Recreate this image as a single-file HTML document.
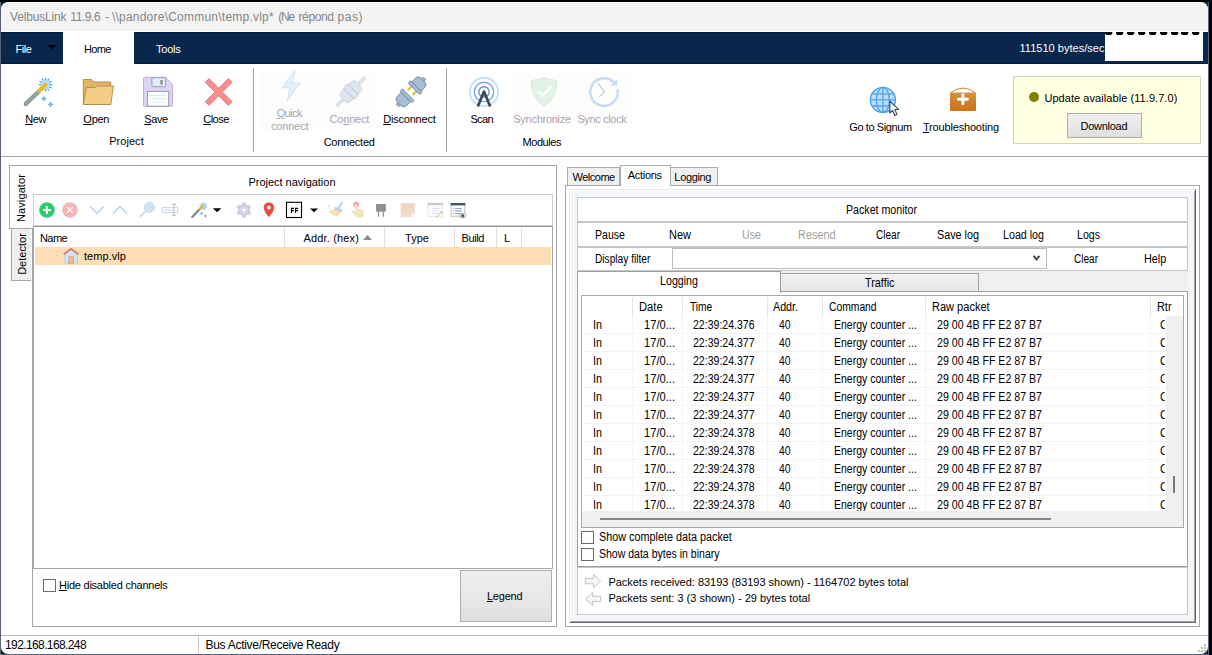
<!DOCTYPE html>
<html><head><meta charset="utf-8"><title>VelbusLink</title>
<style>
html,body{margin:0;padding:0;}
body{width:1212px;height:655px;overflow:hidden;background:#000;position:relative;font-family:"Liberation Sans",sans-serif;font-size:11px;color:#000;}
div{box-sizing:border-box;}
.t,.m,.ti,.s{position:absolute;white-space:nowrap;height:16px;line-height:16px;font-family:"Liberation Sans",sans-serif;}
.t{font-size:11px;}
.m{font-size:12px;transform-origin:0 50%;}
.s{font-size:12px;}
.ti{font-size:12px;color:#858585;}
u{text-decoration:underline;text-underline-offset:1px;}
svg{position:absolute;overflow:visible;}
</style></head><body>
<div style="position:absolute;left:0px;top:2px;width:1px;height:653px;background:#566378"></div>
<div style="position:absolute;left:0px;top:654px;width:1209px;height:1px;background:#566378"></div>
<div style="position:absolute;left:1px;top:2px;width:1207px;height:40px;background:#09274b"></div>
<div style="position:absolute;left:1px;top:600px;width:1207px;height:54px;background:#10151c"></div>
<div style="position:absolute;left:1px;top:2px;width:1207px;height:30px;background:#f3f3f3;border-radius:7px 7px 0 0;border-top:1px solid #fff;border-bottom:1px solid #fff"></div>
<div style="position:absolute;left:1px;top:32px;width:1207px;height:32px;background:#09274b;border-top:1px solid #031b3c;border-bottom:1px solid #031b3c"></div>
<div style="position:absolute;left:1px;top:64px;width:1207px;height:590px;background:#fff;border-radius:0 0 7px 7px"></div>
<div style="position:absolute;left:1208px;top:2px;width:1px;height:652px;background:#566378"></div>
<div class="ti" style="left:10px;top:9px;letter-spacing:-0.174px;">VelbusLink</div>
<div class="ti" style="left:70.3px;top:9px;letter-spacing:-0.412px;">11.9.6</div>
<div class="ti" style="left:104.9px;top:9px;">-</div>
<div class="ti" style="left:111.9px;top:9px;letter-spacing:0.228px;">\\pandore\Commun\temp.vlp*</div>
<div class="ti" style="left:278.2px;top:9px;letter-spacing:-1.179px;">(Ne</div>
<div class="ti" style="left:298.5px;top:9px;letter-spacing:-0.394px;">répond</div>
<div class="ti" style="left:337.5px;top:9px;letter-spacing:0.539px;">pas)</div>
<div style="position:absolute;left:63px;top:32px;width:71px;height:32px;background:#fff"></div>
<div class="t" style="left:15.5px;top:41px;color:#fff;letter-spacing:-0.431px;">File</div>
<svg style="left:48px;top:45px" width="8" height="4"><path d="M0 0H8L4 4.2Z" fill="#000"/></svg>
<div class="t" style="left:84px;top:41px;letter-spacing:-0.661px;">Home</div>
<div class="t" style="left:156px;top:41px;color:#fff;letter-spacing:-0.216px;">Tools</div>
<div class="t" style="left:1019.5px;top:40px;color:#fff;letter-spacing:0.025px;">111510 bytes/sec</div>
<div style="position:absolute;left:1105px;top:32px;width:98px;height:29px;background:#fff"></div>
<svg style="left:1105px;top:32px" width="8" height="3"><path d="M0 0H7.3V1.3Q7.3 1.8 6.9 2.1L6.2 2.8Q5.9 3 5.5 3H1.8Q1.4 3 1.1 2.8L0.4 2.1Q0 1.8 0 1.3Z" fill="#000"/></svg>
<svg style="left:1115.7px;top:32px" width="8" height="3"><path d="M0 0H7.3V1.3Q7.3 1.8 6.9 2.1L6.2 2.8Q5.9 3 5.5 3H1.8Q1.4 3 1.1 2.8L0.4 2.1Q0 1.8 0 1.3Z" fill="#000"/></svg>
<svg style="left:1126.8px;top:32px" width="8" height="3"><path d="M0 0H7.3V1.3Q7.3 1.8 6.9 2.1L6.2 2.8Q5.9 3 5.5 3H1.8Q1.4 3 1.1 2.8L0.4 2.1Q0 1.8 0 1.3Z" fill="#000"/></svg>
<svg style="left:1137.8px;top:32px" width="8" height="3"><path d="M0 0H7.3V1.3Q7.3 1.8 6.9 2.1L6.2 2.8Q5.9 3 5.5 3H1.8Q1.4 3 1.1 2.8L0.4 2.1Q0 1.8 0 1.3Z" fill="#000"/></svg>
<svg style="left:1148.9px;top:32px" width="8" height="3"><path d="M0 0H7.3V1.3Q7.3 1.8 6.9 2.1L6.2 2.8Q5.9 3 5.5 3H1.8Q1.4 3 1.1 2.8L0.4 2.1Q0 1.8 0 1.3Z" fill="#000"/></svg>
<svg style="left:1159.5px;top:32px" width="8" height="3"><path d="M0 0H7.3V1.3Q7.3 1.8 6.9 2.1L6.2 2.8Q5.9 3 5.5 3H1.8Q1.4 3 1.1 2.8L0.4 2.1Q0 1.8 0 1.3Z" fill="#000"/></svg>
<svg style="left:1170.6px;top:32px" width="8" height="3"><path d="M0 0H7.3V1.3Q7.3 1.8 6.9 2.1L6.2 2.8Q5.9 3 5.5 3H1.8Q1.4 3 1.1 2.8L0.4 2.1Q0 1.8 0 1.3Z" fill="#000"/></svg>
<svg style="left:1181.1px;top:32px" width="8" height="3"><path d="M0 0H7.3V1.3Q7.3 1.8 6.9 2.1L6.2 2.8Q5.9 3 5.5 3H1.8Q1.4 3 1.1 2.8L0.4 2.1Q0 1.8 0 1.3Z" fill="#000"/></svg>
<svg style="left:1191.7px;top:32px" width="8" height="3"><path d="M0 0H7.3V1.3Q7.3 1.8 6.9 2.1L6.2 2.8Q5.9 3 5.5 3H1.8Q1.4 3 1.1 2.8L0.4 2.1Q0 1.8 0 1.3Z" fill="#000"/></svg>
<div style="position:absolute;left:1px;top:156px;width:1207px;height:1px;background:#a6a6a6"></div>
<div style="position:absolute;left:253px;top:68px;width:1px;height:84px;background:#a2a2a2"></div>
<div style="position:absolute;left:446px;top:68px;width:1px;height:84px;background:#a2a2a2"></div>
<div style="position:absolute;left:260px;top:69px;width:57px;height:62px;background:#fdfdfd"></div>
<div style="position:absolute;left:320px;top:69px;width:58px;height:62px;background:#fdfdfd"></div>
<div style="position:absolute;left:513px;top:69px;width:119px;height:62px;background:#fdfdfd"></div>
<div class="t" style="left:-4.37px;top:111px;width:80px;text-align:center;letter-spacing:-0.335px;"><u>N</u>ew</div>
<div class="t" style="left:56.26px;top:111px;width:80px;text-align:center;letter-spacing:-0.277px;"><u>O</u>pen</div>
<div class="t" style="left:116.03px;top:111px;width:80px;text-align:center;letter-spacing:-0.343px;"><u>S</u>ave</div>
<div class="t" style="left:176.03px;top:111px;width:80px;text-align:center;letter-spacing:-0.545px;"><u>C</u>lose</div>
<div class="t" style="left:86.52px;top:133px;width:80px;text-align:center;letter-spacing:0.038px;">Project</div>
<div class="t" style="left:249.33px;top:105px;width:80px;text-align:center;color:#a9a4ae;letter-spacing:-0.544px;"><u>Q</u>uick</div>
<div class="t" style="left:249.73px;top:118px;width:80px;text-align:center;color:#a9a4ae;letter-spacing:-0.132px;">connect</div>
<div class="t" style="left:309.40px;top:111px;width:80px;text-align:center;color:#a9a4ae;letter-spacing:-0.196px;">Co<u>n</u>nect</div>
<div class="t" style="left:369.39px;top:111px;width:80px;text-align:center;letter-spacing:-0.211px;"><u>D</u>isconnect</div>
<div class="t" style="left:309.18px;top:134px;width:80px;text-align:center;letter-spacing:-0.245px;">Connected</div>
<div class="t" style="left:441.69px;top:111px;width:80px;text-align:center;letter-spacing:-0.618px;">Scan</div>
<div class="t" style="left:502.06px;top:111px;width:80px;text-align:center;color:#a9a4ae;letter-spacing:-0.276px;">Synchronize</div>
<div class="t" style="left:561.92px;top:111px;width:80px;text-align:center;color:#a9a4ae;letter-spacing:-0.357px;">Sync clock</div>
<div class="t" style="left:501.80px;top:134px;width:80px;text-align:center;letter-spacing:-0.397px;">Modules</div>
<div class="t" style="left:830.50px;top:119px;width:100px;text-align:center;letter-spacing:-0.396px;">Go to Signum</div>
<div class="t" style="left:910.92px;top:119px;width:100px;text-align:center;letter-spacing:-0.165px;"><u>T</u>roubleshooting</div>
<div style="position:absolute;left:1013px;top:76px;width:188px;height:68px;background:#ffffe1;border:1px solid #d4d4c4"></div>
<div style="position:absolute;left:1029px;top:92px;width:10px;height:10px;background:#7f7f00;border-radius:5px"></div>
<div class="t" style="left:1044.4px;top:90px;letter-spacing:0.064px;">Update available (11.9.7.0)</div>
<div style="position:absolute;left:1067px;top:113px;width:75px;height:25px;background:linear-gradient(#eeeeee,#e9e9e9 45%,#dfdfdf);border:1px solid #adadad"></div>
<div class="t" style="left:1066.87px;top:118px;width:74px;text-align:center;letter-spacing:-0.265px;">Download</div>
<div style="position:absolute;left:9px;top:165px;width:548px;height:1px;background:#a6a6a6"></div>
<div style="position:absolute;left:9px;top:165px;width:1px;height:63px;background:#a6a6a6"></div>
<div style="position:absolute;left:9px;top:228px;width:24px;height:1px;background:#a6a6a6"></div>
<div style="position:absolute;left:32px;top:228px;width:1px;height:399px;background:#a6a6a6"></div>
<div style="position:absolute;left:32px;top:626px;width:525px;height:1px;background:#a6a6a6"></div>
<div style="position:absolute;left:556px;top:165px;width:1px;height:462px;background:#a6a6a6"></div>
<div style="position:absolute;left:11px;top:229px;width:20px;height:52px;background:#f0f0f0;border:1px solid #a6a6a6;border-top:none;border-right:none"></div>
<div class="t" style="left:-19.35px;top:190px;width:80px;text-align:center;transform:rotate(-90deg);letter-spacing:0.102px">Navigator</div>
<div class="t" style="left:-17.99px;top:246.4px;width:80px;text-align:center;transform:rotate(-90deg);letter-spacing:0.016px">Detector</div>
<div class="t" style="left:191.99px;top:174px;width:200px;text-align:center;letter-spacing:-0.025px;">Project navigation</div>
<div style="position:absolute;left:33px;top:194px;width:520px;height:32px;border:1px solid #d0d0d0;background:#fff"></div>
<div style="position:absolute;left:33px;top:226px;width:520px;height:343px;border:1px solid #a0a6b0;border-top:1px solid #8f959e;background:#fff"></div>
<div class="t" style="left:40px;top:230px;letter-spacing:-0.586px;">Name</div>
<div style="position:absolute;left:284px;top:228px;width:1px;height:19px;background:#e0e0e0"></div>
<div style="position:absolute;left:384px;top:228px;width:1px;height:19px;background:#e0e0e0"></div>
<div style="position:absolute;left:454px;top:228px;width:1px;height:19px;background:#e0e0e0"></div>
<div style="position:absolute;left:496px;top:228px;width:1px;height:19px;background:#e0e0e0"></div>
<div style="position:absolute;left:521px;top:228px;width:1px;height:19px;background:#e0e0e0"></div>
<div class="t" style="left:303.5px;top:230px;letter-spacing:0.154px;">Addr. (hex)</div>
<svg style="left:363px;top:235px" width="9" height="5"><path d="M0 5L4.5 0L9 5Z" fill="#8a8a8a"/></svg>
<div class="t" style="left:405px;top:230px;letter-spacing:0.038px;">Type</div>
<div class="t" style="left:461.5px;top:230px;letter-spacing:-0.392px;">Build</div>
<div class="t" style="left:504px;top:230px;">L</div>
<div style="position:absolute;left:35px;top:247px;width:516px;height:18px;background:#ffdeb5"></div>
<div class="t" style="left:84px;top:248px;letter-spacing:0.053px;">temp.vlp</div>
<div style="position:absolute;left:43px;top:579px;width:13px;height:13px;border:1px solid #6a6a6a;background:#fff"></div>
<div class="t" style="left:59px;top:577px;letter-spacing:-0.238px;"><u>H</u>ide disabled channels</div>
<div style="position:absolute;left:460px;top:570px;width:92px;height:52px;background:linear-gradient(#eeeeee,#e9e9e9 45%,#dfdfdf);border:1px solid #adadad"></div>
<div class="t" style="left:459.70px;top:588px;width:90px;text-align:center;letter-spacing:-0.201px;"><u>L</u>egend</div>
<div style="position:absolute;left:1204px;top:644px;width:2px;height:2px;background:#bdbdbd"></div>
<div style="position:absolute;left:1201px;top:647px;width:2px;height:2px;background:#bdbdbd"></div>
<div style="position:absolute;left:1204px;top:647px;width:2px;height:2px;background:#bdbdbd"></div>
<div style="position:absolute;left:1198px;top:650px;width:2px;height:2px;background:#bdbdbd"></div>
<div style="position:absolute;left:1201px;top:650px;width:2px;height:2px;background:#bdbdbd"></div>
<div style="position:absolute;left:1204px;top:650px;width:2px;height:2px;background:#bdbdbd"></div>
<div style="position:absolute;left:1px;top:635px;width:1207px;height:1px;background:#bababa"></div>
<div style="position:absolute;left:198px;top:636px;width:1px;height:18px;background:#c8c8c8"></div>
<div class="s" style="left:5px;top:637px;letter-spacing:-0.606px;">192.168.168.248</div>
<div class="s" style="left:205.5px;top:637px;letter-spacing:-0.287px;">Bus Active/Receive Ready</div>
<div style="position:absolute;left:565px;top:185px;width:635px;height:442px;border:1px solid #a6a6a6;background:#fff"></div>
<div style="position:absolute;left:569px;top:189px;width:627px;height:434px;background:#fff;border-left:1px solid #e9e9e9;border-top:1px solid #e9e9e9;border-right:1px solid #696969;border-bottom:1px solid #696969"></div>
<div style="position:absolute;left:571px;top:191px;width:624px;height:431px;background:#f3f6fb;border-right:1px solid #a0a0a0;border-bottom:1px solid #a0a0a0"></div>
<div style="position:absolute;left:567px;top:167px;width:53px;height:18px;background:#f0f0f0;border:1px solid #acacac;border-bottom:none"></div>
<div style="position:absolute;left:671px;top:167px;width:47px;height:18px;background:#f0f0f0;border:1px solid #acacac;border-bottom:none;border-left:none"></div>
<div style="position:absolute;left:620px;top:165px;width:51px;height:21px;background:#fff;border:1px solid #acacac;border-bottom:none"></div>
<div class="t" style="left:563.65px;top:169px;width:60px;text-align:center;letter-spacing:-0.492px;">Welcome</div>
<div class="t" style="left:614.85px;top:167px;width:60px;text-align:center;letter-spacing:-0.296px;">Actions</div>
<div class="t" style="left:662.73px;top:169px;width:60px;text-align:center;letter-spacing:-0.350px;">Logging</div>
<div style="position:absolute;left:577px;top:197px;width:611px;height:25px;border:1px solid #c6c6c6;background:#fff"></div>
<div class="m" style="left:846.20px;top:202px;transform:scaleX(0.8871);">Packet monitor</div>
<div style="position:absolute;left:577px;top:222px;width:611px;height:25px;border:1px solid #c6c6c6;background:#fff"></div>
<div class="m" style="left:595.30px;top:227px;transform:scaleX(0.8817);">Pause</div>
<div class="m" style="left:669.40px;top:227px;transform:scaleX(0.9164);">New</div>
<div class="m" style="left:742.30px;top:227px;transform:scaleX(0.8904);color:#a0a0a0;">Use</div>
<div class="m" style="left:798.30px;top:227px;transform:scaleX(0.9115);color:#a0a0a0;">Resend</div>
<div class="m" style="left:875.60px;top:227px;transform:scaleX(0.8369);">Clear</div>
<div class="m" style="left:937.20px;top:227px;transform:scaleX(0.8994);">Save log</div>
<div class="m" style="left:1003.30px;top:227px;transform:scaleX(0.8905);">Load log</div>
<div class="m" style="left:1077.00px;top:227px;transform:scaleX(0.8839);">Logs</div>
<div style="position:absolute;left:577px;top:247px;width:611px;height:24px;border:1px solid #c6c6c6;background:#fff"></div>
<div class="m" style="left:594.70px;top:251px;transform:scaleX(0.8477);">Display filter</div>
<div style="position:absolute;left:672px;top:248px;width:375px;height:21px;border:1px solid #bdbdbd;background:#fff"></div>
<svg style="left:1033px;top:255px" width="7" height="6"><path d="M0.5 0.8L3.5 4.4L6.5 0.8" fill="none" stroke="#484848" stroke-width="2"/></svg>
<div class="m" style="left:1073.80px;top:251px;transform:scaleX(0.8369);">Clear</div>
<div class="m" style="left:1144.20px;top:251px;transform:scaleX(0.9036);">Help</div>
<div style="position:absolute;left:577px;top:271px;width:611px;height:21px;background:#f0f0f0"></div>
<div style="position:absolute;left:577px;top:291px;width:611px;height:276px;border:1px solid #a0a0a0;background:#fff"></div>
<div style="position:absolute;left:780px;top:273px;width:199px;height:19px;background:linear-gradient(#f2f2f2,#e6e6e6);border:1px solid #a0a0a0"></div>
<div style="position:absolute;left:577px;top:271px;width:204px;height:22px;background:#fff;border:1px solid #a0a0a0;border-bottom:none"></div>
<div class="m" style="left:660.30px;top:273px;transform:scaleX(0.8897);">Logging</div>
<div class="m" style="left:864.85px;top:275px;transform:scaleX(0.9029);">Traffic</div>
<div style="position:absolute;left:581px;top:295px;width:603px;height:233px;border:1px solid #a6a9b0;background:#fff"></div>
<div style="position:absolute;left:632px;top:297px;width:1px;height:19px;background:#e5e5e5"></div>
<div style="position:absolute;left:682px;top:297px;width:1px;height:19px;background:#e5e5e5"></div>
<div style="position:absolute;left:767px;top:297px;width:1px;height:19px;background:#e5e5e5"></div>
<div style="position:absolute;left:822px;top:297px;width:1px;height:19px;background:#e5e5e5"></div>
<div style="position:absolute;left:925px;top:297px;width:1px;height:19px;background:#e5e5e5"></div>
<div style="position:absolute;left:1150px;top:297px;width:1px;height:19px;background:#e5e5e5"></div>
<div class="m" style="left:639.10px;top:299px;transform:scaleX(0.9311);">Date</div>
<div class="m" style="left:689.70px;top:299px;transform:scaleX(0.8505);">Time</div>
<div class="m" style="left:773.40px;top:299px;transform:scaleX(0.8922);">Addr.</div>
<div class="m" style="left:829.00px;top:299px;transform:scaleX(0.8599);">Command</div>
<div class="m" style="left:932.30px;top:299px;transform:scaleX(0.9187);">Raw packet</div>
<div class="m" style="left:1156.60px;top:299px;transform:scaleX(0.9065);">Rtr</div>
<div class="m" style="left:593.20px;top:317px;transform:scaleX(0.8993);">In</div>
<div class="m" style="left:643.60px;top:317px;transform:scaleX(0.9293);">17/0...</div>
<div class="m" style="left:693.40px;top:317px;transform:scaleX(0.8792);">22:39:24.376</div>
<div class="m" style="left:778.80px;top:317px;transform:scaleX(0.8691);">40</div>
<div class="m" style="left:833.60px;top:317px;transform:scaleX(0.8742);">Energy counter ...</div>
<div class="m" style="left:936.50px;top:317px;transform:scaleX(0.8843);">29 00 4B FF E2 87 B7</div>
<div class="m" style="left:1160.00px;top:317px;transform:scaleX(0.9150);width:5px;overflow:hidden;">C</div>
<div class="m" style="left:593.20px;top:335px;transform:scaleX(0.8993);">In</div>
<div class="m" style="left:643.60px;top:335px;transform:scaleX(0.9293);">17/0...</div>
<div class="m" style="left:693.40px;top:335px;transform:scaleX(0.8792);">22:39:24.377</div>
<div class="m" style="left:778.80px;top:335px;transform:scaleX(0.8691);">40</div>
<div class="m" style="left:833.60px;top:335px;transform:scaleX(0.8742);">Energy counter ...</div>
<div class="m" style="left:936.50px;top:335px;transform:scaleX(0.8843);">29 00 4B FF E2 87 B7</div>
<div class="m" style="left:1160.00px;top:335px;transform:scaleX(0.9150);width:5px;overflow:hidden;">C</div>
<div class="m" style="left:593.20px;top:353px;transform:scaleX(0.8993);">In</div>
<div class="m" style="left:643.60px;top:353px;transform:scaleX(0.9293);">17/0...</div>
<div class="m" style="left:693.40px;top:353px;transform:scaleX(0.8792);">22:39:24.377</div>
<div class="m" style="left:778.80px;top:353px;transform:scaleX(0.8691);">40</div>
<div class="m" style="left:833.60px;top:353px;transform:scaleX(0.8742);">Energy counter ...</div>
<div class="m" style="left:936.50px;top:353px;transform:scaleX(0.8843);">29 00 4B FF E2 87 B7</div>
<div class="m" style="left:1160.00px;top:353px;transform:scaleX(0.9150);width:5px;overflow:hidden;">C</div>
<div class="m" style="left:593.20px;top:371px;transform:scaleX(0.8993);">In</div>
<div class="m" style="left:643.60px;top:371px;transform:scaleX(0.9293);">17/0...</div>
<div class="m" style="left:693.40px;top:371px;transform:scaleX(0.8792);">22:39:24.377</div>
<div class="m" style="left:778.80px;top:371px;transform:scaleX(0.8691);">40</div>
<div class="m" style="left:833.60px;top:371px;transform:scaleX(0.8742);">Energy counter ...</div>
<div class="m" style="left:936.50px;top:371px;transform:scaleX(0.8843);">29 00 4B FF E2 87 B7</div>
<div class="m" style="left:1160.00px;top:371px;transform:scaleX(0.9150);width:5px;overflow:hidden;">C</div>
<div class="m" style="left:593.20px;top:389px;transform:scaleX(0.8993);">In</div>
<div class="m" style="left:643.60px;top:389px;transform:scaleX(0.9293);">17/0...</div>
<div class="m" style="left:693.40px;top:389px;transform:scaleX(0.8792);">22:39:24.377</div>
<div class="m" style="left:778.80px;top:389px;transform:scaleX(0.8691);">40</div>
<div class="m" style="left:833.60px;top:389px;transform:scaleX(0.8742);">Energy counter ...</div>
<div class="m" style="left:936.50px;top:389px;transform:scaleX(0.8843);">29 00 4B FF E2 87 B7</div>
<div class="m" style="left:1160.00px;top:389px;transform:scaleX(0.9150);width:5px;overflow:hidden;">C</div>
<div class="m" style="left:593.20px;top:407px;transform:scaleX(0.8993);">In</div>
<div class="m" style="left:643.60px;top:407px;transform:scaleX(0.9293);">17/0...</div>
<div class="m" style="left:693.40px;top:407px;transform:scaleX(0.8792);">22:39:24.377</div>
<div class="m" style="left:778.80px;top:407px;transform:scaleX(0.8691);">40</div>
<div class="m" style="left:833.60px;top:407px;transform:scaleX(0.8742);">Energy counter ...</div>
<div class="m" style="left:936.50px;top:407px;transform:scaleX(0.8843);">29 00 4B FF E2 87 B7</div>
<div class="m" style="left:1160.00px;top:407px;transform:scaleX(0.9150);width:5px;overflow:hidden;">C</div>
<div class="m" style="left:593.20px;top:425px;transform:scaleX(0.8993);">In</div>
<div class="m" style="left:643.60px;top:425px;transform:scaleX(0.9293);">17/0...</div>
<div class="m" style="left:693.40px;top:425px;transform:scaleX(0.8792);">22:39:24.378</div>
<div class="m" style="left:778.80px;top:425px;transform:scaleX(0.8691);">40</div>
<div class="m" style="left:833.60px;top:425px;transform:scaleX(0.8742);">Energy counter ...</div>
<div class="m" style="left:936.50px;top:425px;transform:scaleX(0.8843);">29 00 4B FF E2 87 B7</div>
<div class="m" style="left:1160.00px;top:425px;transform:scaleX(0.9150);width:5px;overflow:hidden;">C</div>
<div class="m" style="left:593.20px;top:443px;transform:scaleX(0.8993);">In</div>
<div class="m" style="left:643.60px;top:443px;transform:scaleX(0.9293);">17/0...</div>
<div class="m" style="left:693.40px;top:443px;transform:scaleX(0.8792);">22:39:24.378</div>
<div class="m" style="left:778.80px;top:443px;transform:scaleX(0.8691);">40</div>
<div class="m" style="left:833.60px;top:443px;transform:scaleX(0.8742);">Energy counter ...</div>
<div class="m" style="left:936.50px;top:443px;transform:scaleX(0.8843);">29 00 4B FF E2 87 B7</div>
<div class="m" style="left:1160.00px;top:443px;transform:scaleX(0.9150);width:5px;overflow:hidden;">C</div>
<div class="m" style="left:593.20px;top:461px;transform:scaleX(0.8993);">In</div>
<div class="m" style="left:643.60px;top:461px;transform:scaleX(0.9293);">17/0...</div>
<div class="m" style="left:693.40px;top:461px;transform:scaleX(0.8792);">22:39:24.378</div>
<div class="m" style="left:778.80px;top:461px;transform:scaleX(0.8691);">40</div>
<div class="m" style="left:833.60px;top:461px;transform:scaleX(0.8742);">Energy counter ...</div>
<div class="m" style="left:936.50px;top:461px;transform:scaleX(0.8843);">29 00 4B FF E2 87 B7</div>
<div class="m" style="left:1160.00px;top:461px;transform:scaleX(0.9150);width:5px;overflow:hidden;">C</div>
<div class="m" style="left:593.20px;top:479px;transform:scaleX(0.8993);">In</div>
<div class="m" style="left:643.60px;top:479px;transform:scaleX(0.9293);">17/0...</div>
<div class="m" style="left:693.40px;top:479px;transform:scaleX(0.8792);">22:39:24.378</div>
<div class="m" style="left:778.80px;top:479px;transform:scaleX(0.8691);">40</div>
<div class="m" style="left:833.60px;top:479px;transform:scaleX(0.8742);">Energy counter ...</div>
<div class="m" style="left:936.50px;top:479px;transform:scaleX(0.8843);">29 00 4B FF E2 87 B7</div>
<div class="m" style="left:1160.00px;top:479px;transform:scaleX(0.9150);width:5px;overflow:hidden;">C</div>
<div class="m" style="left:593.20px;top:497px;transform:scaleX(0.8993);">In</div>
<div class="m" style="left:643.60px;top:497px;transform:scaleX(0.9293);">17/0...</div>
<div class="m" style="left:693.40px;top:497px;transform:scaleX(0.8792);">22:39:24.378</div>
<div class="m" style="left:778.80px;top:497px;transform:scaleX(0.8691);">40</div>
<div class="m" style="left:833.60px;top:497px;transform:scaleX(0.8742);">Energy counter ...</div>
<div class="m" style="left:936.50px;top:497px;transform:scaleX(0.8843);">29 00 4B FF E2 87 B7</div>
<div class="m" style="left:1160.00px;top:497px;transform:scaleX(0.9150);width:5px;overflow:hidden;">C</div>
<div style="position:absolute;left:584px;top:333px;width:582px;height:1px;border-top:1px dotted #e9e9e9"></div>
<div style="position:absolute;left:584px;top:351px;width:582px;height:1px;border-top:1px dotted #e9e9e9"></div>
<div style="position:absolute;left:584px;top:369px;width:582px;height:1px;border-top:1px dotted #e9e9e9"></div>
<div style="position:absolute;left:584px;top:387px;width:582px;height:1px;border-top:1px dotted #e9e9e9"></div>
<div style="position:absolute;left:584px;top:405px;width:582px;height:1px;border-top:1px dotted #e9e9e9"></div>
<div style="position:absolute;left:584px;top:423px;width:582px;height:1px;border-top:1px dotted #e9e9e9"></div>
<div style="position:absolute;left:584px;top:441px;width:582px;height:1px;border-top:1px dotted #e9e9e9"></div>
<div style="position:absolute;left:584px;top:459px;width:582px;height:1px;border-top:1px dotted #e9e9e9"></div>
<div style="position:absolute;left:584px;top:477px;width:582px;height:1px;border-top:1px dotted #e9e9e9"></div>
<div style="position:absolute;left:584px;top:495px;width:582px;height:1px;border-top:1px dotted #e9e9e9"></div>
<div style="position:absolute;left:632px;top:317px;width:1px;height:194px;border-left:1px dotted #ebebeb"></div>
<div style="position:absolute;left:682px;top:317px;width:1px;height:194px;border-left:1px dotted #ebebeb"></div>
<div style="position:absolute;left:767px;top:317px;width:1px;height:194px;border-left:1px dotted #ebebeb"></div>
<div style="position:absolute;left:822px;top:317px;width:1px;height:194px;border-left:1px dotted #ebebeb"></div>
<div style="position:absolute;left:925px;top:317px;width:1px;height:194px;border-left:1px dotted #ebebeb"></div>
<div style="position:absolute;left:1150px;top:317px;width:1px;height:194px;border-left:1px dotted #ebebeb"></div>
<div style="position:absolute;left:1166px;top:316px;width:17px;height:195px;background:#f0f0f0"></div>
<div style="position:absolute;left:1173px;top:476px;width:2px;height:17px;background:#7a7a7a"></div>
<div style="position:absolute;left:582px;top:511px;width:601px;height:16px;background:#f0f0f0"></div>
<div style="position:absolute;left:600px;top:518px;width:451px;height:2px;background:#858585"></div>
<div style="position:absolute;left:581px;top:531px;width:13px;height:13px;border:1px solid #6a6a6a;background:#fff"></div>
<div style="position:absolute;left:581px;top:548px;width:13px;height:13px;border:1px solid #6a6a6a;background:#fff"></div>
<div class="m" style="left:598.60px;top:529px;transform:scaleX(0.9008);">Show complete data packet</div>
<div class="m" style="left:598.60px;top:546px;transform:scaleX(0.8769);">Show data bytes in binary</div>
<div style="position:absolute;left:577px;top:567px;width:611px;height:48px;border:1px solid #c6c6c6;background:#fff"></div>
<div class="t" style="left:608.4px;top:574px;letter-spacing:-0.021px;">Packets received: 83193 (83193 shown) - 1164702 bytes total</div>
<div class="t" style="left:608.4px;top:590px;letter-spacing:-0.002px;">Packets sent: 3 (3 shown) - 29 bytes total</div>
<svg style="left:0;top:0" width="1212" height="655" viewBox="0 0 1212 655">
<!-- NEW: wand -->
<g>
 <g fill="#3c9ae8">
  <path d="M45.6 76.8L46.7 80.5L44.5 80.5Z"/>
  <path d="M45.6 76.8L46.7 80.5L44.5 80.5Z" transform="rotate(30 45.6 84.6)"/><path d="M45.6 76.8L46.7 80.5L44.5 80.5Z" transform="rotate(60 45.6 84.6)"/>
  <path d="M45.6 76.8L46.7 80.5L44.5 80.5Z" transform="rotate(90 45.6 84.6)"/><path d="M45.6 76.8L46.7 80.5L44.5 80.5Z" transform="rotate(120 45.6 84.6)"/>
  <path d="M45.6 76.8L46.7 80.5L44.5 80.5Z" transform="rotate(150 45.6 84.6)"/><path d="M45.6 76.8L46.7 80.5L44.5 80.5Z" transform="rotate(180 45.6 84.6)"/>
  <path d="M45.6 76.8L46.7 80.5L44.5 80.5Z" transform="rotate(210 45.6 84.6)"/><path d="M45.6 76.8L46.7 80.5L44.5 80.5Z" transform="rotate(240 45.6 84.6)"/>
  <path d="M45.6 76.8L46.7 80.5L44.5 80.5Z" transform="rotate(270 45.6 84.6)"/><path d="M45.6 76.8L46.7 80.5L44.5 80.5Z" transform="rotate(300 45.6 84.6)"/>
  <path d="M45.6 76.8L46.7 80.5L44.5 80.5Z" transform="rotate(330 45.6 84.6)"/>
 </g>
 <circle cx="45.6" cy="84.6" r="5" fill="#b5dafc"/>
 <path d="M25.7 104L39 91.2" stroke="#77858a" stroke-width="4.2" stroke-linecap="round" fill="none"/>
 <path d="M25.7 104L39 91.2" stroke="#95a5a5" stroke-width="3" stroke-linecap="round" fill="none"/>
 <path d="M38.3 91.9L45.6 84.6" stroke="#f5b81a" stroke-width="4" stroke-linecap="butt" fill="none"/>
 <circle cx="45.5" cy="84.7" r="2" fill="#f5b81a"/>
 <path d="M43.9 95.7L44.8 97.8L46.9 98.7L44.8 99.6L43.9 101.7L43 99.6L40.9 98.7L43 97.8Z" fill="#3c9ae8"/>
 <circle cx="43.9" cy="98.7" r="0.9" fill="#9ccdf6"/>
 <path d="M50.5 101.2L51.4 103.4L53.6 104.3L51.4 105.2L50.5 107.4L49.6 105.2L47.4 104.3L49.6 103.4Z" fill="#3c9ae8"/>
 <circle cx="50.5" cy="104.3" r="0.9" fill="#9ccdf6"/>
</g>
<!-- OPEN: folder -->
<g stroke="#a6813f" stroke-width="0.8" stroke-linejoin="round">
 <path d="M83.3 104.5V79.5H91.8L93.7 81.9H110.7V104.5Z" fill="#e0b566"/>
 <path d="M83.3 104.5L86.3 87.5H95.4L97.6 86H113.6L110.7 104.5Z" fill="#f5ce85"/>
</g>
<!-- SAVE: floppy -->
<g>
 <path d="M144.4 77.3H165.6L172.5 84.3V105.3Q172.5 106.2 171.6 106.2H144.4Q143.5 106.2 143.5 105.3V78.2Q143.5 77.3 144.4 77.3Z" fill="#ddd4f3" stroke="#bfa4d4" stroke-width="0.9"/>
 <rect x="151.9" y="77.6" width="13.7" height="9.1" rx="1.2" fill="#e3ecf3" stroke="#8c9bb0" stroke-width="0.9"/>
 <rect x="160.3" y="80" width="2.5" height="4.6" fill="#8795a5"/>
 <rect x="147.4" y="91.4" width="21.3" height="14.8" fill="#fff" stroke="#8795a5" stroke-width="0.9"/>
 <path d="M150 95.4H166M150 98.6H166M150 102H166" stroke="#d6ecfb" stroke-width="1.2"/>
</g>
<!-- CLOSE: X -->
<g fill="#f78f8f" stroke="#cf5c62" stroke-width="0.7">
 <path d="M209 78.6L218.7 88.3L228.4 78.6L232.1 82.3L222.4 92L232.1 101.7L228.4 105.4L218.7 95.7L209 105.4L205.3 101.7L215 92L205.3 82.3Z"/>
</g>
<!-- QUICK CONNECT -->
<path d="M294.8 70.9L281.9 87.8H289.9L287.3 100.8L300.2 83.1H292.5Z" fill="#e3f0fc" stroke="#c9dcf0" stroke-width="0.8" stroke-linejoin="round"/>
<!-- CONNECT (disabled) -->
<g transform="translate(350.9 91.7) rotate(-45)" fill="#dde5ee" stroke="#c8d2de" stroke-width="0.8">
 <rect x="-19.8" y="-1.4" width="39.6" height="2.8"/>
 <rect x="-11" y="-6.6" width="11" height="13.2" rx="3.5"/>
 <rect x="-3" y="-8.2" width="6" height="16.4" rx="2.5"/>
 <rect x="0" y="-6.6" width="11" height="13.2" rx="3.5"/>
 <rect x="-2.9" y="-7.8" width="5.8" height="15.6" rx="2.2" stroke="none"/>
 <path d="M-3 -8V8M3 -8V8" fill="none" stroke="#c0ccda" stroke-width="1"/>
</g>
<!-- DISCONNECT -->
<g transform="translate(411 91.9) rotate(-45)" fill="#a9bcd4" stroke="#6682a4" stroke-width="0.9" stroke-linejoin="round">
 <rect x="-19.2" y="-1.7" width="4" height="3.4"/>
 <path d="M-7 -6.6V6.6H-12Q-16.8 6.6 -16.8 2V-2Q-16.8 -6.6 -12 -6.6Z"/>
 <rect x="-7.2" y="-8.2" width="3.3" height="16.4" rx="0.8"/>
 <rect x="-0.8" y="-4.4" width="5.4" height="1.9" fill="#e8c53e" stroke="#d9b02a" stroke-width="0.4"/>
 <rect x="-0.8" y="2.4" width="5.4" height="1.9" fill="#e8c53e" stroke="#d9b02a" stroke-width="0.4"/>
 <rect x="15.2" y="-1.7" width="4" height="3.4"/>
 <path d="M7.4 -6.6V6.6H12Q16.8 6.6 16.8 2V-2Q16.8 -6.6 12 -6.6Z"/>
 <rect x="4.3" y="-8.2" width="3.3" height="16.4" rx="0.8"/>
</g>
<!-- SCAN -->
<g fill="none">
 <circle cx="484" cy="91.9" r="14.1" stroke="#bfe3ff" stroke-width="1.9"/>
 <circle cx="484" cy="91.9" r="9.7" stroke="#7fa9ee" stroke-width="1.4"/>
 <circle cx="484" cy="91.9" r="5.2" stroke="#6a8fd6" stroke-width="1.4"/>
 <path d="M477.8 106.4L484 91.6L490.2 106.4" stroke="#3b4958" stroke-width="2.7" stroke-linejoin="round"/>
</g>
<!-- SYNCHRONIZE -->
<path d="M544 77.3Q538 80 531.3 80.5Q530.5 97 544 106.7Q557.5 97 556.7 80.5Q550 80 544 77.3Z" fill="#e2f2e6" stroke="#d2e8d8" stroke-width="0.8"/>
<path d="M538.2 91.2L542.6 95.4L551.2 86.8" fill="none" stroke="#fff" stroke-width="2.3"/>
<!-- SYNC CLOCK -->
<g fill="none">
 <path d="M617.5 89A13.8 13.8 0 1 1 614.6 83.2" stroke="#c9dcf5" stroke-width="2.6"/>
 <path d="M617 79V85.8H610.2Z" fill="#c9dcf5"/>
 <path d="M598.1 83.4L604.4 92L599.2 96.8" stroke="#c6ccd6" stroke-width="1.3"/>
 <path d="M604 81.3V82.3M604 101.7V102.7M593.3 92H594.3M613.7 92H614.7" stroke="#dfe8f3" stroke-width="1"/>
</g>
<!-- GO TO SIGNUM -->
<g>
 <circle cx="882.9" cy="99.9" r="12.5" fill="#bcdefb" stroke="#4da2ee" stroke-width="1.4"/>
 <g fill="none" stroke="#4da2ee" stroke-width="1.3">
  <path d="M870.4 99.9H895.4M872.2 93.9H893.6M872.2 106H893.6M882.9 87.4V112.4"/>
  <ellipse cx="882.9" cy="99.9" rx="6.5" ry="12.5"/>
 </g>
 <path d="M889.8 101.2V113L892.6 110.5L894.8 115.4L897 114.4L894.9 109.6L898.6 109.3Z" fill="#f4f6f7" stroke="#37474f" stroke-width="1.1" stroke-linejoin="round"/>
</g>
<!-- TROUBLESHOOTING -->
<defs><linearGradient id="kit" x1="0" y1="0" x2="0" y2="1"><stop offset="0" stop-color="#d6933e"/><stop offset="0.7" stop-color="#c97a22"/><stop offset="0.72" stop-color="#cf7f27"/><stop offset="1" stop-color="#c8741c"/></linearGradient></defs>
<path d="M950.4 92.8Q963 83.4 975.6 92.8" fill="#fff" stroke="#d2812b" stroke-width="1"/>
<rect x="950" y="92.6" width="26" height="18.3" rx="0.8" fill="url(#kit)"/>
<path d="M958.3 99.3H967.5M962.9 94.7V103.9" stroke="#fff" stroke-width="2.9" stroke-linecap="round"/>
<!-- add -->
<circle cx="46.95" cy="210" r="7.8" fill="#2ecc71"/>
<path d="M43 210H50.9M46.95 206.1V213.9" stroke="#fff" stroke-width="2.1"/>
<!-- remove -->
<circle cx="69.9" cy="210" r="7.8" fill="#f4b6b2"/>
<path d="M67 207.1L72.8 212.9M72.8 207.1L67 212.9" stroke="#fff" stroke-width="1.3"/>
<!-- chevrons -->
<path d="M89.9 206.3L96.9 213.3L104.1 206.3" fill="none" stroke="#b5d3ef" stroke-width="1.5"/>
<path d="M112.8 213.5L119.9 206.5L127.2 213.5" fill="none" stroke="#b5d3ef" stroke-width="1.5"/>
<!-- magnifier -->
<path d="M145.8 211.2L139.9 217" stroke="#d5dadf" stroke-width="2"/>
<circle cx="149.3" cy="207.4" r="5.2" fill="#cfe3f3" stroke="#c8d6e2" stroke-width="0.8"/>
<!-- rename -->
<rect x="162.4" y="207.5" width="15.2" height="5" fill="#fff" stroke="#d0d5da" stroke-width="0.9"/>
<rect x="164" y="208.9" width="9" height="2.2" fill="#dfeefa"/>
<path d="M174 204.4V215.5M172 204.4H176M172 215.5H176" stroke="#c0c4c8" stroke-width="1.1" fill="none"/>
<!-- small wand -->
<g>
 <g fill="#4aa3ea">
  <path d="M203.2 201.9L203.9 204.3L202.5 204.3Z"/>
  <path d="M203.2 201.9L203.9 204.3L202.5 204.3Z" transform="rotate(36 203.2 206.2)"/><path d="M203.2 201.9L203.9 204.3L202.5 204.3Z" transform="rotate(72 203.2 206.2)"/>
  <path d="M203.2 201.9L203.9 204.3L202.5 204.3Z" transform="rotate(108 203.2 206.2)"/><path d="M203.2 201.9L203.9 204.3L202.5 204.3Z" transform="rotate(144 203.2 206.2)"/>
  <path d="M203.2 201.9L203.9 204.3L202.5 204.3Z" transform="rotate(180 203.2 206.2)"/><path d="M203.2 201.9L203.9 204.3L202.5 204.3Z" transform="rotate(216 203.2 206.2)"/>
  <path d="M203.2 201.9L203.9 204.3L202.5 204.3Z" transform="rotate(252 203.2 206.2)"/><path d="M203.2 201.9L203.9 204.3L202.5 204.3Z" transform="rotate(288 203.2 206.2)"/>
  <path d="M203.2 201.9L203.9 204.3L202.5 204.3Z" transform="rotate(324 203.2 206.2)"/>
 </g>
 <circle cx="203.2" cy="206.2" r="2.8" fill="#a9d3fa"/>
 <path d="M192.2 217L199.6 209.3" stroke="#7c8a8c" stroke-width="2.2" stroke-linecap="round"/>
 <path d="M199.2 209.7L203 206" stroke="#f5b81a" stroke-width="2.3" stroke-linecap="butt"/>
 <path d="M201.8 211.7L202.4 212.9L203.6 213.5L202.4 214.1L201.8 215.3L201.2 214.1L200 213.5L201.2 212.9Z" fill="#4aa3ea"/>
 <path d="M205.4 214.2L206 215.4L207.2 216L206 216.6L205.4 217.8L204.8 216.6L203.6 216L204.8 215.4Z" fill="#4aa3ea"/>
</g>
<path d="M212.8 208.2H221.3L217.05 212.2Z" fill="#000"/>
<!-- gear -->
<g>
 <g fill="#d5c8e4">
  <circle cx="243.9" cy="210" r="6"/>
  <rect x="242.1" y="202.3" width="3.6" height="4" rx="1.2"/>
  <rect x="242.1" y="202.3" width="3.6" height="4" rx="1.2" transform="rotate(60 243.9 210)"/><rect x="242.1" y="202.3" width="3.6" height="4" rx="1.2" transform="rotate(120 243.9 210)"/>
  <rect x="242.1" y="202.3" width="3.6" height="4" rx="1.2" transform="rotate(180 243.9 210)"/><rect x="242.1" y="202.3" width="3.6" height="4" rx="1.2" transform="rotate(240 243.9 210)"/>
  <rect x="242.1" y="202.3" width="3.6" height="4" rx="1.2" transform="rotate(300 243.9 210)"/>
 </g>
 <circle cx="243.9" cy="210" r="4" fill="#d5dadd"/>
 <circle cx="243.9" cy="210" r="1.5" fill="#fff"/>
</g>
<!-- pin -->
<path d="M268.9 217.3Q263.7 211 263.7 207.4A5.2 5.2 0 0 1 274.1 207.4Q274.1 211 268.9 217.3Z" fill="#e74c3c"/>
<circle cx="268.9" cy="207.5" r="1.9" fill="#eef6fb"/>
<!-- FF -->
<rect x="286.5" y="202.3" width="15" height="15.2" fill="#fff" stroke="#000" stroke-width="1.1"/>
<path d="M291.5 213V208.4H294M291.5 210.6H293.8M295.6 213V208.4H298.1M295.6 210.6H297.9" fill="none" stroke="#000" stroke-width="1.1"/>
<path d="M309.9 208.4H318.1L314 212.2Z" fill="#000"/>
<!-- broom -->
<path d="M341.8 202.6L338.6 208.2" stroke="#b9d4f0" stroke-width="2.2" stroke-linecap="round"/>
<path d="M334.4 208.4L341.8 211.3L336.4 217.6L328.6 212.1Z" fill="#f6e0b8"/>
<path d="M335.3 206.8L342.3 209.8L341.4 211.7L334.2 208.6Z" fill="#b5d0f0"/>
<path d="M334 209.3L341 212.2" stroke="#f3b8b0" stroke-width="0.7"/>
<path d="M328.5 204L329.2 205.3L330.5 205.9L329.2 206.5L328.5 207.8L327.8 206.5L326.5 205.9L327.8 205.3Z" fill="#cfe0f4"/>
<circle cx="330.6" cy="208.6" r="0.8" fill="#cfe0f4"/>
<!-- hand -->
<circle cx="356.2" cy="204.6" r="2.9" fill="#f19c9c"/>
<path d="M354.9 205.3Q354.9 203.9 356.2 203.9Q357.5 203.9 357.5 205.3V209.3Q358.8 208.6 360 209.3Q361.3 208.9 362.2 209.8Q363.9 209.8 363.9 211.6V214.5Q363.9 217.7 360.6 217.7H358.6Q356.6 217.7 355.4 216.1L351.7 211.7Q351.2 210.6 352.4 210.3Q353.4 210.1 354.9 211.7Z" fill="#efe6be"/>
<!-- plug -->
<rect x="376" y="204.1" width="9.9" height="7.6" rx="1" fill="#909090"/>
<path d="M378.5 211.5V216.8M383.4 211.5V216.8" stroke="#909090" stroke-width="1.3"/>
<!-- note -->
<path d="M401 203.3H414.8V213.6L411.6 216.8H401Z" fill="#f2d9c9" stroke="#ead0bf" stroke-width="0.5"/>
<path d="M403 205.5H412.8M403 207.4H412.8M403 209.2H408" stroke="#e8cbb9" stroke-width="0.8"/>
<path d="M411.6 216.8V213.6H414.8Z" fill="#fff" stroke="#ddd" stroke-width="0.4"/>
<!-- window edit -->
<rect x="427.8" y="203.2" width="14.6" height="13.4" fill="#fdfdfe" stroke="#e3e6ea" stroke-width="0.8"/>
<rect x="427.6" y="203" width="15" height="2.2" fill="#c5cad2"/>
<path d="M432 208.5H439M432 211H439M432 213.5H439" stroke="#d9e3f2" stroke-width="1.2"/>
<path d="M430.5 208.5H431M430.5 211H431M430.5 213.5H431" stroke="#cfd8e6" stroke-width="0.8"/>
<path d="M441.5 212.2L436.8 216.9" stroke="#f0e2bd" stroke-width="2.2"/>
<path d="M442.2 211.5L441.2 212.5" stroke="#f0a0a8" stroke-width="2.2"/>
<path d="M436.9 216.3L436 217.6L437.3 217.1Z" fill="#7a7a7a"/>
<!-- window view -->
<rect x="451.2" y="203.6" width="13.6" height="12.6" fill="#fff" stroke="#b8c0ca" stroke-width="1"/>
<rect x="450.7" y="203" width="14.6" height="2.4" fill="#44546a"/>
<path d="M455 208.4H462M455 213.5H462" stroke="#8aa6d6" stroke-width="1"/>
<path d="M455 210.9H462" stroke="#a9bfe3" stroke-width="1.7"/>
<path d="M453.3 208.4H454M453.3 210.9H454M453.3 213.5H454" stroke="#6a88c0" stroke-width="0.9"/>
<ellipse cx="462.5" cy="215.7" rx="3.3" ry="2.2" fill="#fff" stroke="#b99a4e" stroke-width="0.9"/>
<circle cx="462.6" cy="215.7" r="1.5" fill="#2b4a8a"/>
<!-- tree row: house -->
<path d="M52 255.5H64" stroke="#c9c4bc" stroke-width="1" stroke-dasharray="1 1"/><path d="M53 255.5H64" stroke="#fff" stroke-width="1" stroke-dasharray="1 1" opacity="0.7"/>
<path d="M64.8 254.4L71 249.8L77.4 254.4V263H64.8Z" fill="#cfe6fa" stroke="#a9c9e8" stroke-width="0.8"/>
<rect x="68.8" y="256.8" width="4.5" height="6.3" fill="#f6b989" stroke="#d9915c" stroke-width="0.7"/>
<path d="M63.6 254.4L71 248.9L78.5 254.4" fill="none" stroke="#e06b6b" stroke-width="1.5" stroke-linejoin="round"/>
<!-- arrows in summary -->
<path d="M585.3 578.4H593.4V574.4L600.6 581.1L593.4 587.8V583.8H585.3Z" fill="#f6f6f6" stroke="#bdbdbd" stroke-width="0.9" stroke-linejoin="round"/>
<path d="M600.6 596.3H592.6V592.3L585.4 598.9L592.6 605.6V601.4H600.6Z" fill="#f6f6f6" stroke="#bdbdbd" stroke-width="0.9" stroke-linejoin="round"/>
</svg>
</body></html>
